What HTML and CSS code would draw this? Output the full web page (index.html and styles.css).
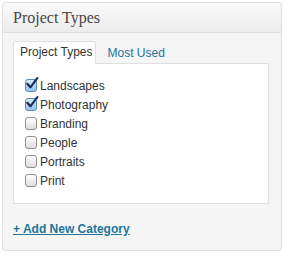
FILE: index.html
```html
<!DOCTYPE html>
<html>
<head>
<meta charset="utf-8">
<link rel="stylesheet" href="styles.css">
</head>
<body>
<div class="box">
  <div class="head">Project Types</div>
  <div class="inside">
    <div class="tabs">
      <span class="tab active">Project Types</span>
      <span class="tab">Most Used</span>
    </div>
    <div class="panel">
      <label class="row"><span class="cb checked"><svg class="tick" width="14" height="14" viewBox="0 0 14 14"><path d="M2.3 6.8 L5.4 10.3 L12.3 1.2" fill="none" stroke="#1c2c58" stroke-width="2.2" stroke-linecap="round" stroke-linejoin="round"/></svg></span>Landscapes</label>
      <label class="row"><span class="cb checked"><svg class="tick" width="14" height="14" viewBox="0 0 14 14"><path d="M2.3 6.8 L5.4 10.3 L12.3 1.2" fill="none" stroke="#1c2c58" stroke-width="2.2" stroke-linecap="round" stroke-linejoin="round"/></svg></span>Photography</label>
      <label class="row"><span class="cb"></span>Branding</label>
      <label class="row"><span class="cb"></span>People</label>
      <label class="row"><span class="cb"></span>Portraits</label>
      <label class="row"><span class="cb"></span>Print</label>
    </div>
    <a class="add" href="#">+ Add New Category</a>
  </div>
</div>
</body>
</html>
```
FILE: styles.css
```css
html, body {
  margin: 0;
  padding: 0;
  background: #fff;
}
.box {
  margin: 2px;
  width: 278px;
  border: 1px solid #dfdfdf;
  border-radius: 3px;
  background: #f5f5f5;
  box-sizing: content-box;
}
.head {
  height: 29px;
  line-height: 29px;
  padding-left: 10px;
  font-family: "Liberation Serif", serif;
  font-size: 16px;
  color: #464646;
  background: linear-gradient(#f9f9f9, #ececec);
  border-bottom: 1px solid #dfdfdf;
  border-radius: 3px 3px 0 0;
}
.inside {
  padding: 9px 12px 13px 10px;
  font-family: "Liberation Sans", Arial, sans-serif;
  font-size: 12px;
}
.tabs {
  display: flex;
  align-items: flex-end;
  height: 22px;
  position: relative;
  z-index: 1;
  margin-bottom: -1px;
}
.tab {
  display: block;
  height: 21px;
  line-height: 21px;
  color: #21759b;
  padding: 0 0 0 11px;
}
.tab.active {
  color: #333;
  background: #fff;
  border: 1px solid #dfdfdf;
  border-bottom: none;
  border-radius: 3px 3px 0 0;
  height: 22px;
  line-height: 21px;
  padding: 0 3px 0 6px;
}
.panel {
  background: #fff;
  border: 1px solid #dfdfdf;
  padding: 12px 11px 13px 11px;
  display: flex;
  flex-direction: column;
}
.row {
  display: flex;
  align-items: center;
  height: 19px;
  color: #333;
}
.cb {
  position: relative;
  width: 10px;
  height: 11px;
  margin-right: 3px;
  border: 1px solid #8f8f8f;
  border-radius: 3px;
  background: linear-gradient(#ffffff, #dedede);
  box-shadow: inset 0 1px 0 #fff;
  flex: none;
}
.cb.checked {
  border-color: #6189b4;
  background: linear-gradient(#d8ecfb, #8fc3ee);
  box-shadow: none;
}
.tick {
  position: absolute;
  left: -1px;
  top: -3px;
}
.add {
  display: inline-block;
  margin-top: 17px;
  line-height: 16px;
  font-weight: bold;
  color: #21759b;
  text-decoration: underline;
}
```
